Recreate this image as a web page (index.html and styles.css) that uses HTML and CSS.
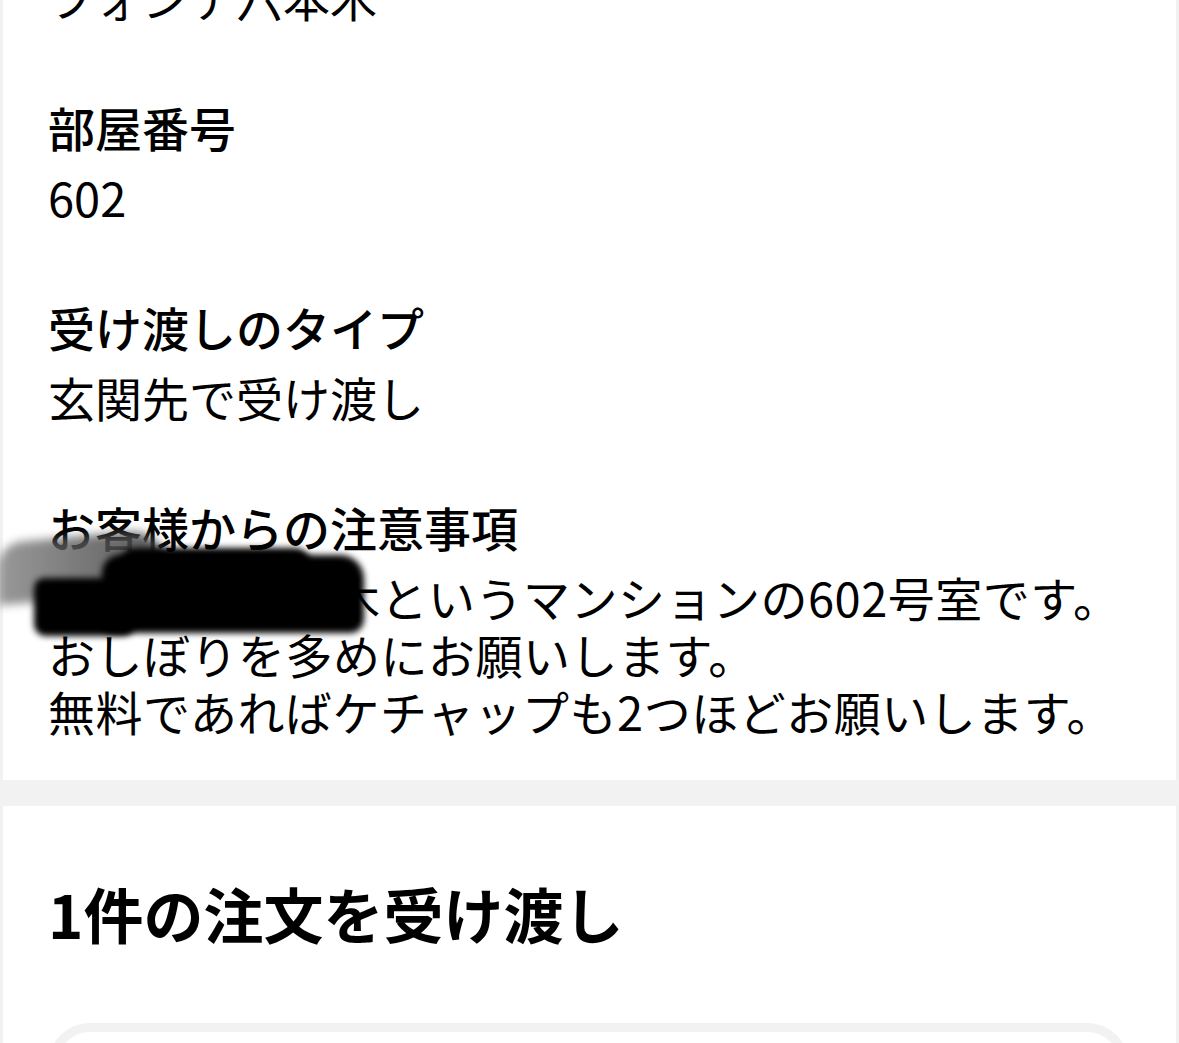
FILE: index.html
```html
<!DOCTYPE html>
<html lang="ja">
<head>
<meta charset="utf-8">
<title>配達詳細</title>
<link rel="stylesheet" href="styles.css">
</head>
<body>
<div class="screen">
  <div class="panel details">
    <div class="field first">
      <div class="value">フォンテ六本木</div>
    </div>
    <div class="field">
      <div class="label">部屋番号</div>
      <div class="value">602</div>
    </div>
    <div class="field">
      <div class="label">受け渡しのタイプ</div>
      <div class="value">玄関先で受け渡し</div>
    </div>
    <div class="field notes">
      <div class="label">お客様からの注意事項</div>
      <div class="value multi">フォンテ六本木というマンションの602号室です。<br>おしぼりを多めにお願いします。<br>無料であればケチャップも2つほどお願いします。</div>
      <div class="scribble smear"></div>
      <div class="scribble blob-main"></div>
      <div class="scribble blob-top"></div>
      <div class="scribble blob-left"></div>
    </div>
  </div>
  <div class="band"></div>
  <div class="panel orders">
    <h2 class="orders-title">1件の注文を受け渡し</h2>
    <div class="order-card"></div>
  </div>
</div>
</body>
</html>
```
FILE: styles.css
```css
html, body {
  margin: 0;
  padding: 0;
  background: #ffffff;
  overflow: hidden;
}

body {
  font-family: "Noto Sans CJK JP", "Noto Sans", sans-serif;
  color: #000000;
}

.screen {
  width: 1179px;
  height: 1043px;
  overflow: hidden;
}

.panel {
  background: #ffffff;
  border-left: 3px solid #f1f1f1;
  border-right: 3px solid #f1f1f1;
  padding: 0 47px 0 45px;
}

.details {
  padding-bottom: 41px;
}

.field {
  display: flex;
  flex-direction: column;
  gap: 13px;
  margin-top: 73px;
}

.field.first {
  margin-top: -32px;
}

.label {
  font-size: 47px;
  line-height: 57px;
  font-weight: 500;
  white-space: nowrap;
}

.value {
  font-size: 47px;
  line-height: 57px;
  font-weight: 400;
  white-space: nowrap;
}

.multi {
  letter-spacing: 0.5px;
}

.notes {
  position: relative;
}

.scribble {
  position: absolute;
  background: #000000;
  filter: blur(3px);
}

.smear {
  left: -50px;
  top: 38px;
  width: 170px;
  height: 62px;
  background: linear-gradient(90deg, rgba(110, 110, 110, 0.7), rgba(70, 70, 70, 0.9));
  border-radius: 24px 40px 10px 4px;
  transform: skewY(-5deg);
  filter: blur(5px);
}

.blob-main {
  left: 54px;
  top: 57px;
  width: 262px;
  height: 78px;
  border-radius: 18px 24px 14px 10px;
}

.blob-top {
  left: 72px;
  top: 50px;
  width: 190px;
  height: 30px;
  border-radius: 20px;
}

.blob-left {
  left: -14px;
  top: 80px;
  width: 100px;
  height: 58px;
  border-radius: 10px 8px 10px 12px;
}

.band {
  height: 26px;
  background: #f2f2f2;
}

.orders {
  padding-top: 67px;
  height: 300px;
}

.orders-title {
  margin: 0;
  font-size: 60px;
  line-height: 80px;
  font-weight: 700;
  white-space: nowrap;
}

.order-card {
  margin-top: 70px;
  height: 200px;
  border: 9px solid #f2f2f2;
  border-radius: 42px;
  background: #ffffff;
}
```
